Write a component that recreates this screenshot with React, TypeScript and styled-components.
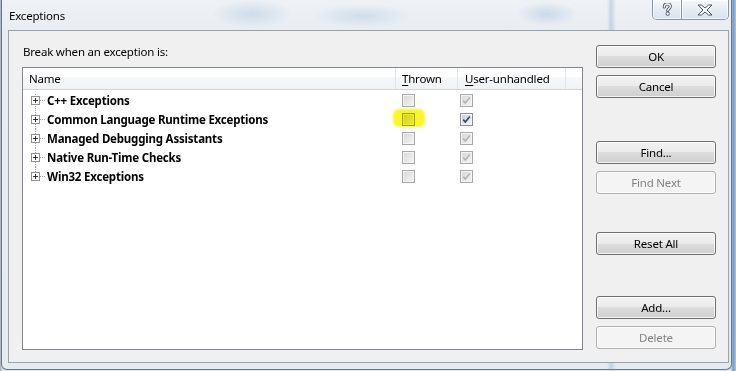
import styled, { createGlobalStyle } from "styled-components";

const GlobalStyle = createGlobalStyle`
	html, body {
		margin: 0;
		padding: 0;
	}
	body {
		width: 736px;
		height: 371px;
		overflow: hidden;
		background: linear-gradient(90deg, #b9a3b6 0, #9fc9d2 1px, #d9e4ee 2px, #d9e4ee 731px, #6f97c8 733px, #a9c3e2 736px);
		font-family: "Noto Sans", "Liberation Sans", sans-serif;
		font-size: 11.5px;
		letter-spacing: -0.2px;
		color: #000;
	}
`;

const Window = styled.div`
	margin-left: 1px;
	width: 731px;
	height: 370px;
	box-sizing: border-box;
	border: 1px solid #6c7787;
	border-top: none;
	border-radius: 0 0 6px 6px;
	display: flex;
	flex-direction: column;
	background:
		radial-gradient(ellipse 40px 14px at 250px 14px, rgba(150, 185, 220, 0.35), transparent),
		radial-gradient(ellipse 50px 12px at 360px 16px, rgba(150, 190, 225, 0.35), transparent),
		radial-gradient(ellipse 30px 12px at 545px 14px, rgba(140, 175, 215, 0.35), transparent),
		linear-gradient(90deg, transparent 605px, rgba(120, 160, 205, 0.35) 609px, transparent 614px),
		linear-gradient(180deg, #eef1f5, #e9edf2 30px, #e6ebf0);
`;

const TitleBar = styled.div`
	height: 30px;
	display: flex;
	align-items: flex-start;
	justify-content: space-between;
	padding: 0 2px 0 7px;
	flex-shrink: 0;
`;

const Title = styled.div`
	padding-top: 7px;
	line-height: 17px;
	font-size: 11.5px;
`;

const CaptionButtons = styled.div`
	display: flex;
	height: 20px;
	border: 1px solid #8b97a6;
	border-top: none;
	border-radius: 0 0 5px 5px;
	overflow: hidden;
	box-sizing: border-box;
`;

const CaptionButton = styled.div<{ $w: number }>`
	width: ${(p) => p.$w}px;
	height: 100%;
	display: flex;
	align-items: center;
	justify-content: center;
	background: linear-gradient(180deg, rgba(255, 255, 255, 0.55), rgba(225, 233, 242, 0.6) 50%, rgba(210, 222, 236, 0.7));
	box-shadow: inset 0 0 0 1px rgba(255, 255, 255, 0.6);
	& + & {
		border-left: 1px solid #8b97a6;
	}
`;

const Client = styled.div`
	margin: 0 2px 6px 6px;
	flex: 1;
	border: 1px solid #98a3b0;
	background: #f0f0f0;
	display: flex;
	padding: 13px 11px 12px 13px;
`;

const LeftPane = styled.div`
	width: 561px;
	display: flex;
	flex-direction: column;
`;

const Label = styled.div`
	line-height: 16px;
	padding-left: 1px;
	margin-bottom: 7px;
`;

const Tree = styled.div`
	flex: 1;
	border: 1px solid #828790;
	background: #fff;
	display: flex;
	flex-direction: column;
`;

const Header = styled.div`
	display: flex;
	height: 21px;
	border-bottom: 1px solid #d5d5d5;
	background: linear-gradient(180deg, #ffffff 0, #ffffff 45%, #f7f8fa 45%, #f1f2f4 100%);
`;

const HeaderCell = styled.div<{ $w?: number; $pad: number }>`
	${(p) => (p.$w ? `width: ${p.$w}px;` : "flex: 1;")}
	box-sizing: border-box;
	padding-left: ${(p) => p.$pad}px;
	line-height: 21px;
	border-right: 1px solid #e3e4e6;
	color: #000;
	u {
		text-decoration: underline;
		text-underline-offset: 2px;
	}
`;

const Filler = styled.div`
	flex: 1;
`;

const Rows = styled.div`
	padding-top: 1px;
`;

const Row = styled.div`
	display: flex;
	height: 19px;
	align-items: center;
`;

const NameCell = styled.div`
	width: 373px;
	display: flex;
	align-items: center;
	padding-left: 8px;
	box-sizing: border-box;
	height: 100%;
	font-weight: 700;
`;

const CheckCell = styled.div<{ $w: number; $pad: number }>`
	width: ${(p) => p.$w}px;
	padding-left: ${(p) => p.$pad}px;
	box-sizing: border-box;
	display: flex;
	align-items: center;
	height: 100%;
	position: relative;
`;

const Highlight = styled.span`
	position: absolute;
	left: -3px;
	top: -1px;
	width: 32px;
	height: 18px;
	border-radius: 6px;
	background: #f7f72a;
	filter: blur(1px);
	mix-blend-mode: multiply;
`;

const Box = styled.span<{ $enabled: boolean }>`
	width: 13px;
	height: 13px;
	box-sizing: border-box;
	border: 1px solid ${(p) => (p.$enabled ? "#8e8f8f" : "#a9a9a9")};
	background: ${(p) =>
		p.$enabled
			? "linear-gradient(135deg, #c6cad1, #f7f7f7)"
			: "linear-gradient(135deg, #d6d6d6, #f5f5f5)"};
	box-shadow: inset 0 0 0 1px #f4f4f4;
	display: flex;
	align-items: center;
	justify-content: center;
`;

const RightPane = styled.div`
	width: 120px;
	margin-left: 13px;
	padding-top: 1px;
	display: flex;
	flex-direction: column;
`;

const Button = styled.div<{ $gap: number; $disabled?: boolean }>`
	margin-top: ${(p) => p.$gap}px;
	height: 23px;
	box-sizing: border-box;
	border: 1px solid ${(p) => (p.$disabled ? "#adb2b5" : "#707070")};
	border-radius: 3px;
	display: flex;
	align-items: center;
	justify-content: center;
	color: ${(p) => (p.$disabled ? "#838383" : "#000")};
	background: ${(p) =>
		p.$disabled
			? "#f4f4f4"
			: "linear-gradient(180deg, #f2f2f2 0%, #ebebeb 50%, #dddddd 50%, #cfcfcf 100%)"};
	box-shadow: inset 0 0 0 1px rgba(255, 255, 255, 0.75);
`;

function HelpGlyph() {
	const d = "M2.3 4 C2.3 2 3.6 1 5.3 1 C7.1 1 8.3 2.1 8.3 3.6 C8.3 5.4 5.7 5.6 5.7 7.6";
	return (
		<svg width="11" height="13" viewBox="0 0 11 13">
			<path d={d} fill="none" stroke="#4b5766" strokeWidth="3.2" strokeLinecap="round" />
			<path d={d} fill="none" stroke="#fff" strokeWidth="1.3" strokeLinecap="round" />
			<circle cx="5.7" cy="10.7" r="1.7" fill="#fff" stroke="#4b5766" strokeWidth="1" />
		</svg>
	);
}

function CloseGlyph() {
	return (
		<svg width="16" height="12" viewBox="0 0 16 12">
			<polygon
				points="1,1 4.5,1 8,4 11.5,1 15,1 10,6 15,11 11.5,11 8,8 4.5,11 1,11 6,6"
				fill="#fff"
				stroke="#4b5766"
				strokeWidth="1"
				strokeLinejoin="round"
			/>
		</svg>
	);
}

function TreeGutter({ first, last }: { first: boolean; last: boolean }) {
	return (
		<svg width="16" height="19" viewBox="0 0 16 19" style={{ flexShrink: 0 }}>
			<line
				x1="4.5"
				y1={first ? 3 : 0}
				x2="4.5"
				y2={last ? 9.5 : 19}
				stroke="#a0a0a0"
				strokeDasharray="1 1"
			/>
			<line x1="9" y1="9.5" x2="15" y2="9.5" stroke="#a0a0a0" strokeDasharray="1 1" />
			<rect x="0.5" y="5.5" width="8" height="8" fill="#fff" stroke="#919191" />
			<line x1="2" y1="9.5" x2="7" y2="9.5" stroke="#333" />
			<line x1="4.5" y1="7" x2="4.5" y2="12" stroke="#333" />
		</svg>
	);
}

function CheckBox({ checked, enabled }: { checked: boolean; enabled: boolean }) {
	return (
		<Box $enabled={enabled}>
			{checked && (
				<svg width="11" height="11" viewBox="0 0 11 11">
					<path
						d="M2.2 5.6 L4.3 8 L8.8 2.4"
						fill="none"
						stroke={enabled ? "#27447a" : "#b4b4b4"}
						strokeWidth="1.6"
					/>
				</svg>
			)}
		</Box>
	);
}

const exceptions = [
	"C++ Exceptions",
	"Common Language Runtime Exceptions",
	"Managed Debugging Assistants",
	"Native Run-Time Checks",
	"Win32 Exceptions",
];

export default function App() {
	return (
		<>
			<GlobalStyle />
			<Window>
				<TitleBar>
					<Title>Exceptions</Title>
					<CaptionButtons>
						<CaptionButton $w={28}>
							<HelpGlyph />
						</CaptionButton>
						<CaptionButton $w={46}>
							<CloseGlyph />
						</CaptionButton>
					</CaptionButtons>
				</TitleBar>
				<Client>
					<LeftPane>
						<Label>Break when an exception is:</Label>
						<Tree>
							<Header>
								<HeaderCell $w={373} $pad={6}>
									Name
								</HeaderCell>
								<HeaderCell $w={62} $pad={6}>
									<u>T</u>hrown
								</HeaderCell>
								<HeaderCell $w={108} $pad={7}>
									<u>U</u>ser-unhandled
								</HeaderCell>
								<Filler />
							</Header>
							<Rows>
								{exceptions.map((name, i) => (
									<Row key={name}>
										<NameCell>
											<TreeGutter first={i === 0} last={i === exceptions.length - 1} />
											{name}
										</NameCell>
										<CheckCell $w={62} $pad={6}>
											<CheckBox checked={false} enabled={false} />
											{i === 1 && <Highlight />}
										</CheckCell>
										<CheckCell $w={108} $pad={2}>
											<CheckBox checked enabled={i === 1} />
										</CheckCell>
									</Row>
								))}
							</Rows>
						</Tree>
					</LeftPane>
					<RightPane>
						<Button $gap={0}>OK</Button>
						<Button $gap={7}>Cancel</Button>
						<Button $gap={43}>Find...</Button>
						<Button $gap={7} $disabled>
							Find Next
						</Button>
						<Button $gap={38}>Reset All</Button>
						<Button $gap={41}>Add...</Button>
						<Button $gap={7} $disabled>
							Delete
						</Button>
					</RightPane>
				</Client>
			</Window>
		</>
	);
}
